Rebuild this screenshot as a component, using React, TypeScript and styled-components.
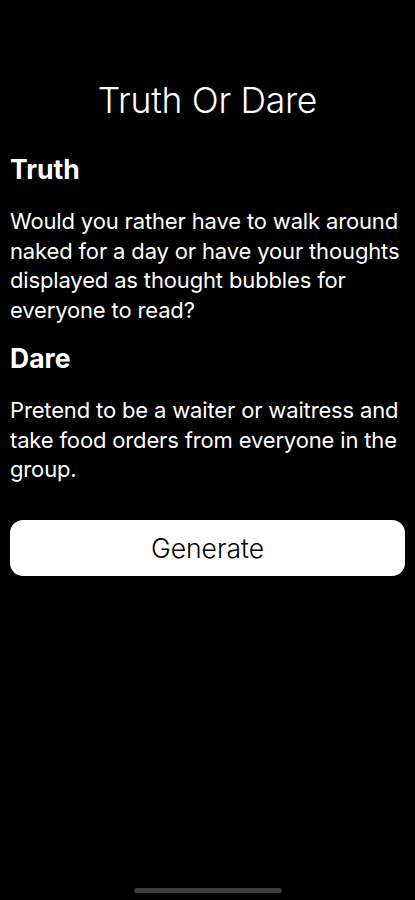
import styled, { createGlobalStyle } from 'styled-components';

const Global = createGlobalStyle`
    html, body {
        margin: 0;
        background: #000;
    }
    body {
        font-family: Inter, "Noto Sans", sans-serif;
        color: #fff;
    }
`;

const Screen = styled.div`
    position: relative;
    width: 415px;
    height: 900px;
    background: #000;
    display: flex;
    flex-direction: column;
    padding: 80px 10px 0;
    box-sizing: border-box;
`;

const Title = styled.h1`
    margin: 0 0 14px;
    font-size: 35.5px;
    font-weight: 300;
    text-align: center;
    line-height: 42px;
    letter-spacing: -0.3px;
`;

const Heading = styled.h2`
    margin: 17px 0 0;
    font-size: 26.5px;
    font-weight: 700;
    line-height: 32px;
`;

const Body = styled.p`
    margin: 22px 0 0;
    font-size: 22px;
    font-weight: 400;
    line-height: 29.5px;
    letter-spacing: -0.15px;
`;

const GenerateButton = styled.button`
    margin-top: 35px;
    height: 56px;
    border: none;
    border-radius: 13px;
    background: #fff;
    color: #000;
    font-family: Inter, "Noto Sans", sans-serif;
    font-size: 26.5px;
    font-weight: 300;
`;

const HomeIndicator = styled.div`
    position: absolute;
    left: 134px;
    bottom: 7px;
    width: 148px;
    height: 5px;
    border-radius: 3px;
    background: #3c3c3c;
`;

export default function App() {
    return (
        <Screen>
            <Global />
            <Title>Truth Or Dare</Title>
            <Heading>Truth</Heading>
            <Body>
                Would you rather have to walk around naked for a day or have your thoughts displayed as
                thought bubbles for everyone to read?
            </Body>
            <Heading>Dare</Heading>
            <Body>Pretend to be a waiter or waitress and take food orders from everyone in the group.</Body>
            <GenerateButton>Generate</GenerateButton>
            <HomeIndicator />
        </Screen>
    );
}
